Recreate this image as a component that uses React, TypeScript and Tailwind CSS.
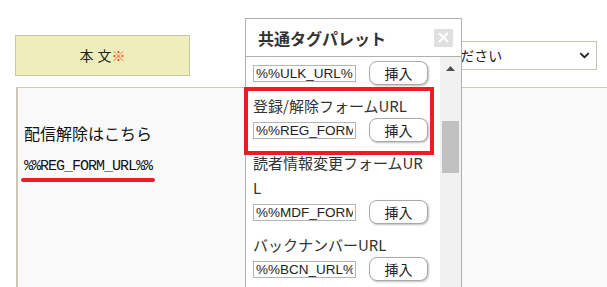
import { FaChevronDown } from "react-icons/fa";

type Tag = {
  label?: string;
  value: string;
};

const tags: Tag[] = [
  { value: "%%ULK_URL%%" },
  { label: "登録/解除フォームURL", value: "%%REG_FORM_URL%%" },
  { label: "読者情報変更フォームURL", value: "%%MDF_FORM_URL%%" },
  { label: "バックナンバーURL", value: "%%BCN_URL%%" },
];

const jp = "font-['Noto_Sans_CJK_JP','Noto_Sans',sans-serif]";

function TagRow({ tag, first }: { tag: Tag; first: boolean }) {
  return (
    <div className={first ? "" : "mt-[8px]"}>
      {tag.label && (
        <div className={`${jp} w-[174px] text-[15px] leading-[25px] text-[#333] break-all`}>{tag.label}</div>
      )}
      <div className="flex items-center h-[24px]">
        <input
          readOnly
          value={tag.value}
          className="w-[103px] h-[17px] border border-[#b4b4b4] bg-white px-[2px] text-[13.5px] leading-[15px] text-[#222] font-['Liberation_Sans',Arial,sans-serif] outline-none"
        />
        <button className="ml-[13px] w-[59px] h-[24px] rounded-[8px] border border-[#a9a9a9] bg-white shadow-[1px_1px_2px_rgba(0,0,0,0.25)] text-[14px] text-[#222] font-['Noto_Sans_CJK_JP',sans-serif] leading-none">
          挿入
        </button>
      </div>
    </div>
  );
}

function TagPalette() {
  return (
    <div className="absolute left-[245px] top-[18px] w-[217px] h-[280px] bg-white border border-[#b0b0b0] flex flex-col">
      <div className="h-[38px] shrink-0 flex items-center justify-between border-b border-[#b0b0b0] pl-[12px] pr-[8px]">
        <span className={`${jp} font-bold text-[16px] text-[#333]`}>共通タグパレット</span>
        <span className="w-[19px] h-[18px] bg-[#e0e0e0] flex items-center justify-center">
          <svg width="11" height="11" viewBox="0 0 11 11">
            <path d="M1 1 L10 10 M10 1 L1 10" stroke="#fff" strokeWidth="2" />
          </svg>
        </span>
      </div>
      <div className="flex flex-1 min-h-0">
        <div className="flex-1 pl-[7px] pt-[4px] overflow-hidden">
          {tags.map((t, i) => (
            <TagRow key={t.value} tag={t} first={i === 0} />
          ))}
        </div>
        <div className="w-[21px] bg-[#f1f1f1] flex flex-col items-center">
          <svg className="mt-[9px]" width="9" height="5" viewBox="0 0 9 5">
            <path d="M0 5 L4.5 0 L9 5 Z" fill="#505050" />
          </svg>
          <div className="mt-[50px] w-[17px] h-[52px] bg-[#c1c1c1]" />
        </div>
      </div>
    </div>
  );
}

export default function App() {
  return (
    <div className="relative w-[607px] h-[287px] overflow-hidden bg-white">
      <div className="pl-[15px] pt-[35px]">
        <div className="flex items-start">
          <div className="w-[175px] h-[41px] bg-[#eeeebc] border border-[#c9c7a6] flex items-center justify-center text-[14px] text-[#222] font-['Noto_Sans_CJK_JP',sans-serif]">
            <span className="mr-[4px]">本</span>文<span className="text-[#ff4422]">※</span>
          </div>
          <div className="ml-auto mr-[10px] mt-[6px] w-[215px] h-[29px] border border-[#c8c4b0] bg-white flex items-center justify-between pl-[8px] pr-[6px]">
            <span className="text-[14px] text-[#222] font-['Noto_Sans_CJK_JP',sans-serif]">選択してください</span>
            <FaChevronDown className="text-[11px] text-[#222]" />
          </div>
        </div>
        <div className="mt-[11px] ml-[1px] w-[620px] h-[220px] bg-[#f9f9f9] border-l-2 border-t border-[#cdc9b3] pl-[6px] pt-[33px]">
          <div className={`${jp} text-[16px] leading-[24px] text-[#111]`}>配信解除はこちら</div>
          <div className="mt-[11px] text-[15px] tracking-[-1px] leading-[22px] text-[#111] font-['Liberation_Mono',monospace]">
            %%REG_FORM_URL%%
          </div>
          <div className="ml-[-3px] w-[134px] h-[4px] rounded-full bg-[#ec1c24]" />
        </div>
      </div>
      <TagPalette />
      <div className="absolute left-[244px] top-[87px] w-[190px] h-[68px] border-4 border-[#ec1c24]" />
    </div>
  );
}
